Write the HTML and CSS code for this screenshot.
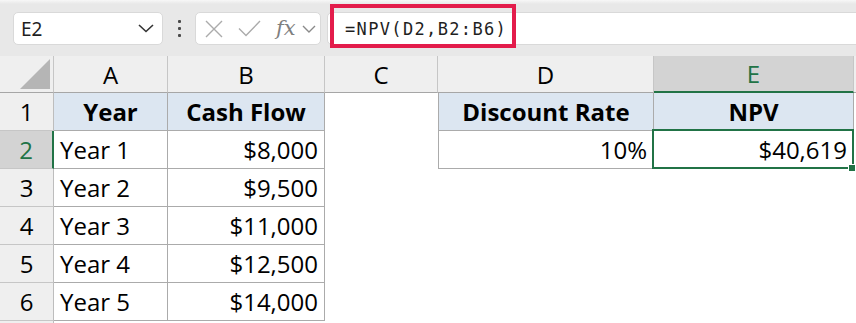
FILE: index.html
```html
<!DOCTYPE html>
<html lang="en">
<head>
    <meta charset="UTF-8">
    <meta name="viewport" content="width=device-width, initial-scale=1.0">
    <title>NPV</title>
    <link rel="stylesheet" href="styles.css">
</head>
<body>
    <!-- Barra de fórmulas -->
    <div class="toolbar">
        <div class="namebox">
            <span>E2</span>
            <svg class="chev-dark" width="16" height="9" viewBox="0 0 16 9"><polyline points="1,1 8,7.5 15,1" fill="none" stroke="#333" stroke-width="1.6"/></svg>
        </div>
        <div class="dots"><i></i><i></i><i></i></div>
        <div class="fnbox">
            <svg class="ico-x" width="18" height="18" viewBox="0 0 18 18"><path d="M1 1L17 17M17 1L1 17" stroke="#ababab" stroke-width="1.4" fill="none"/></svg>
            <svg class="ico-ok" width="23" height="17" viewBox="0 0 23 17"><polyline points="1,8.5 8,15.5 22,1" fill="none" stroke="#ababab" stroke-width="1.4"/></svg>
            <span class="fx">fx</span>
            <svg class="chev" width="14" height="8" viewBox="0 0 14 8"><polyline points="1,1 7,7 13,1" fill="none" stroke="#8a8a8a" stroke-width="1.4"/></svg>
        </div>
        <div class="formula">
            <span class="highlight"></span>
            <span class="ftext">=NPV(D2,B2:B6)</span>
        </div>
    </div>

    <!-- Planilha -->
    <div class="sheet">
        <div class="corner"><span class="tri"></span></div>
        <div class="colhdr">A</div>
        <div class="colhdr">B</div>
        <div class="colhdr">C</div>
        <div class="colhdr">D</div>
        <div class="colhdr active">E</div>
        <div class="colhdr last"></div>

        <div class="rowhdr">1</div>
        <div class="cell boxed head">Year</div>
        <div class="cell boxed head">Cash Flow</div>
        <div class="cell"></div>
        <div class="cell boxed head left">Discount Rate</div>
        <div class="cell boxed head">NPV</div>
        <div class="cell"></div>

        <div class="rowhdr active">2</div>
        <div class="cell boxed">Year 1</div>
        <div class="cell boxed num">$8,000</div>
        <div class="cell"></div>
        <div class="cell boxed num left">10%</div>
        <div class="cell boxed num selected">$40,619</div>
        <div class="cell"></div>

        <div class="rowhdr">3</div>
        <div class="cell boxed">Year 2</div>
        <div class="cell boxed num">$9,500</div>
        <div class="cell"></div><div class="cell"></div><div class="cell"></div><div class="cell"></div>

        <div class="rowhdr">4</div>
        <div class="cell boxed">Year 3</div>
        <div class="cell boxed num">$11,000</div>
        <div class="cell"></div><div class="cell"></div><div class="cell"></div><div class="cell"></div>

        <div class="rowhdr">5</div>
        <div class="cell boxed">Year 4</div>
        <div class="cell boxed num">$12,500</div>
        <div class="cell"></div><div class="cell"></div><div class="cell"></div><div class="cell"></div>

        <div class="rowhdr">6</div>
        <div class="cell boxed">Year 5</div>
        <div class="cell boxed num">$14,000</div>
        <div class="cell"></div><div class="cell"></div><div class="cell"></div><div class="cell"></div>

        <div class="rowhdr"></div>
        <div class="cell"></div><div class="cell"></div><div class="cell"></div><div class="cell"></div><div class="cell"></div><div class="cell"></div>
    </div>
</body>
</html>
```

FILE: styles.css
```css
/* Geral */
* {
    box-sizing: border-box;
}

body {
    margin: 0;
    width: 856px;
    height: 323px;
    overflow: hidden;
    background: #fff;
    font-family: "Open Sans", sans-serif;
}

/* Barra de fórmulas */
.toolbar {
    height: 56px;
    display: flex;
    align-items: center;
    padding: 1px 0 0 13px;
    background: linear-gradient(#f7f7f7 0, #e8e8e8 4px, #e8e8e8 100%);
    overflow: hidden;
}

.namebox {
    width: 150px;
    height: 33px;
    display: flex;
    align-items: center;
    justify-content: space-between;
    padding: 0 8px 0 7px;
    background: #fff;
    border: 1px solid #d9d9d9;
    border-radius: 5px;
    font-family: "Noto Sans", sans-serif;
    font-size: 19px;
    color: #1f1f1f;
}

.dots {
    display: flex;
    flex-direction: column;
    gap: 4px;
    margin: 0 14px 0 15px;
}

.dots i {
    width: 3px;
    height: 3px;
    background: #4a4a4a;
    border-radius: 1px;
}

.fnbox {
    width: 126px;
    height: 33px;
    display: flex;
    align-items: center;
    padding-left: 9px;
    background: #fff;
    border: 1px solid #d9d9d9;
    border-radius: 5px;
}

.ico-ok {
    margin-left: 15px;
}

.fx {
    margin-left: 15px;
    font-family: "DejaVu Serif", serif;
    font-style: italic;
    font-size: 21px;
    line-height: 1;
    color: #7f7f7f;
}

.chev {
    margin-left: 6px;
}

.formula {
    position: relative;
    flex: 1;
    height: 33px;
    margin: 0 -10px 0 6px;
    display: flex;
    align-items: center;
    padding-left: 17px;
    background: #fff;
    border: 1px solid #d9d9d9;
    border-radius: 5px 0 0 5px;
}

.ftext {
    font-family: "DejaVu Sans Mono", monospace;
    font-size: 17px;
    letter-spacing: 1.35px;
    color: #1f1f1f;
    padding-top: 1px;
}

/* Destaque vermelho */
.highlight {
    position: absolute;
    left: 2px;
    top: -9px;
    width: 186px;
    height: 44px;
    border: 4px solid #e31c4b;
}

/* Planilha */
.sheet {
    display: grid;
    grid-template-columns: 54px 114px 157px 113px 216px 200px 1fr;
    grid-template-rows: 37px repeat(7, 38px);
    font-size: 24px;
    color: #000;
}

.corner,
.colhdr,
.rowhdr {
    background: #efefef;
    display: flex;
    align-items: center;
    justify-content: center;
}

.corner {
    position: relative;
    border-right: 1px solid #c6c6c6;
    border-bottom: 1px solid #a6a6a6;
}

.tri {
    position: absolute;
    right: 3px;
    bottom: 3px;
    width: 0;
    height: 0;
    border-left: 30px solid transparent;
    border-bottom: 30px solid #b5b5b5;
}

.colhdr {
    border-right: 1px solid #c6c6c6;
    border-bottom: 1px solid #a6a6a6;
}

.colhdr.active {
    background: #d3d3d3;
    color: #217346;
    border-bottom: 2px solid #217346;
}

.colhdr.last {
    border-right: none;
}

.rowhdr {
    border-right: 1px solid #bdbdbd;
    border-bottom: 1px solid #c6c6c6;
}

.rowhdr.active {
    background: #d3d3d3;
    color: #217346;
    border-right: 2px solid #217346;
}

.cell {
    display: flex;
    align-items: center;
    padding: 0 6px;
    white-space: nowrap;
}

.boxed {
    border-right: 1px solid #ababab;
    border-bottom: 1px solid #ababab;
}

.left {
    border-left: 1px solid #ababab;
}

.head {
    justify-content: center;
    font-weight: bold;
    background: #dce6f1;
}

.num {
    justify-content: flex-end;
}

/* Célula selecionada */
.selected {
    position: relative;
}

.selected::after {
    content: "";
    position: absolute;
    left: -2px;
    top: -2px;
    right: -1px;
    bottom: -1px;
    border: 2px solid #217346;
}

.selected::before {
    content: "";
    position: absolute;
    right: -3px;
    bottom: -4px;
    width: 6px;
    height: 6px;
    background: #217346;
    border: 1px solid #fff;
    z-index: 1;
}
```
